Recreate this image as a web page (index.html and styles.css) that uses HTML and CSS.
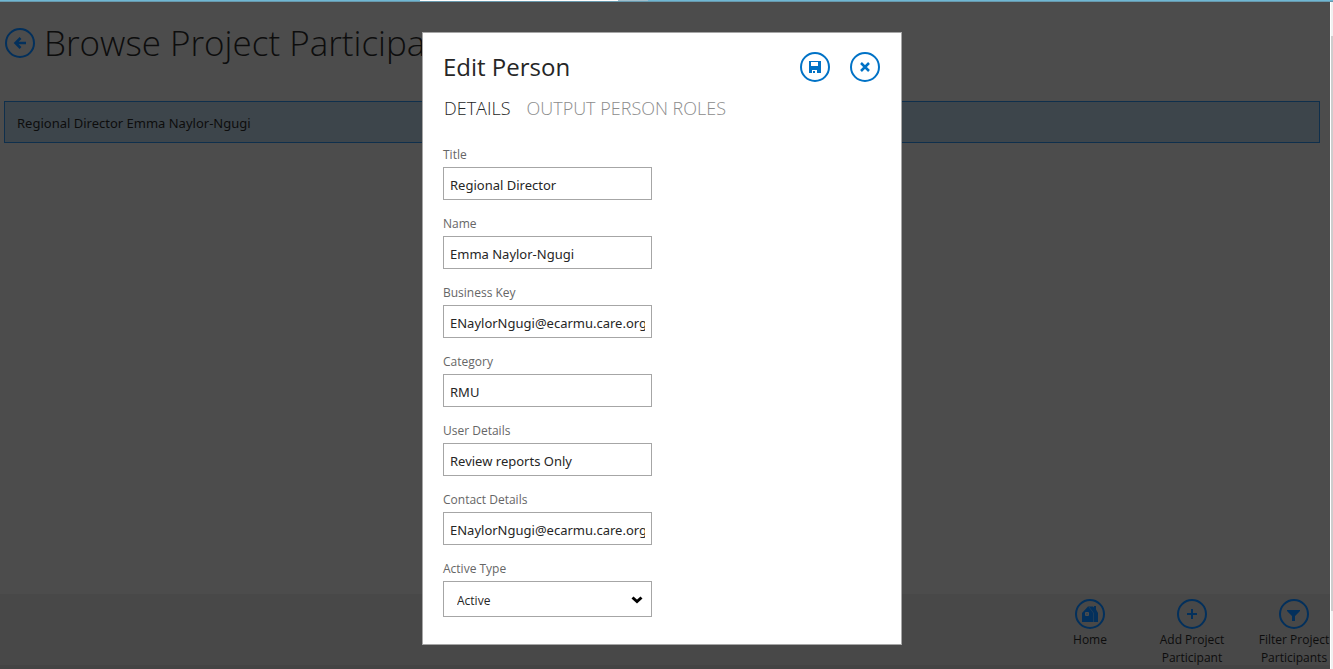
FILE: index.html
```html
<!DOCTYPE html>
<html lang="en">
<head>
<meta charset="utf-8">
<title>Browse Project Participants</title>
<link rel="stylesheet" href="styles.css">
</head>
<body>
<div class="tabstrip"><span class="tab-before"></span><span class="tab-active"></span><span class="tab-new"></span></div>
<div class="app">
  <div class="page">
    <header class="page-header">
      <button class="round round-dim" aria-label="Back">
        <svg viewBox="0 0 30 30"><path class="back-line" d="M21 15H10M15.5 10L10.500 15L15.5 20"/></svg>
      </button>
      <h1 class="page-title">Browse Project Participants</h1>
    </header>
    <main class="list">
      <a class="list-row" href="#">Regional Director Emma Naylor-Ngugi</a>
    </main>
    <footer class="commands">
      <button class="command">
        <span class="round round-dim"><svg viewBox="0 0 30 30"><path class="solid" d="M7 14L13 7.500H18L19 8.500V7H21V10.500L23 14V23H7Z"/><path class="pane" d="M10.5 13.5h3v3h-3zM12 13v4M10 15h4"/><path class="pane-edge" d="M18.500 14V23M18.500 14L14 8"/></svg></span>
        <span class="command-text">Home</span>
      </button>
      <button class="command">
        <span class="round round-dim"><svg viewBox="0 0 30 30"><path class="plus" d="M15 10V20M10 15H20"/></svg></span>
        <span class="command-text">Add Project Participant</span>
      </button>
      <button class="command">
        <span class="round round-dim"><svg viewBox="0 0 30 30"><path class="solid" d="M8 11H21V12L16 17V22H13V17L8 12Z"/></svg></span>
        <span class="command-text">Filter Project Participants</span>
      </button>
    </footer>
  </div>
  <div class="scrollbar"><div class="scroll-thumb"></div></div>
</div>
<div class="layer">
  <form class="dialog" role="dialog" aria-labelledby="dialog-title">
    <div class="dialog-head">
      <h2 class="dialog-title" id="dialog-title">Edit Person</h2>
      <button class="round" type="button" aria-label="Save">
        <svg viewBox="0 0 30 30"><path class="solid" fill-rule="evenodd" d="M9 9H21V21H9ZM11 10V14H18V10ZM12 18V21H13V19H15V21H17V18Z"/></svg>
      </button>
      <button class="round" type="button" aria-label="Close">
        <svg viewBox="0 0 30 30"><path class="cross" d="M11 11L19 19M19 11L11 19"/></svg>
      </button>
    </div>
    <nav class="tabs">
      <a class="tab tab-on" href="#">DETAILS</a>
      <a class="tab" href="#">OUTPUT PERSON ROLES</a>
    </nav>
    <div class="fields">
      <div class="field"><label for="title">Title</label><input id="title" type="text" value="Regional Director"></div>
      <div class="field"><label for="name">Name</label><input id="name" type="text" value="Emma Naylor-Ngugi"></div>
      <div class="field"><label for="key">Business Key</label><input id="key" type="text" value="ENaylorNgugi@ecarmu.care.org"></div>
      <div class="field"><label for="category">Category</label><input id="category" type="text" value="RMU"></div>
      <div class="field"><label for="user">User Details</label><input id="user" type="text" value="Review reports Only"></div>
      <div class="field"><label for="contact">Contact Details</label><input id="contact" type="text" value="ENaylorNgugi@ecarmu.care.org"></div>
      <div class="field"><label for="active">Active Type</label>
        <div class="select-wrap"><select id="active"><option>Active</option></select>
          <svg class="chevron" viewBox="0 0 12 8"><path d="M1.5 1.5L6 5.5L10.5 1.5"/></svg></div>
      </div>
    </div>
  </form>
</div>
</body>
</html>
```
FILE: styles.css
```css
* { box-sizing: border-box; }
body {
  margin: 0;
  height: 100vh;
  overflow: hidden;
  display: flex;
  flex-direction: column;
  font-family: "Noto Sans", "Open Sans", sans-serif;
  font-size: 13px;
  background: #4c4c4c;
  color: #0d0d0d;
}
button { font: inherit; color: inherit; border: 0; padding: 0; background: none; }
a { text-decoration: none; color: inherit; }
svg { display: block; }

.tabstrip { display: flex; height: 2px; background: #6fb7d3; border-bottom: 1px solid #6899ad; }
.tab-before { width: 420px; }
.tab-active { width: 198px; height: 1px; background: #fff; }
.tab-new { width: 30px; height: 1px; background: #9fbecb; }

.app { flex: 1; display: flex; min-height: 0; }
.page { flex: 1; display: flex; flex-direction: column; min-width: 0; }
.scrollbar { width: 3px; padding-top: 34px; background: #f0f0f0; border-left: 1px solid #fff; }
.scroll-thumb { height: 575px; background: #cdcdcd; }

.round {
  flex: none;
  width: 30px;
  height: 30px;
  border: 2px solid #0072c6;
  border-radius: 50%;
  color: #0072c6;
}
.round svg { width: 30px; height: 30px; margin: -2px; }
.round-dim { border-color: #03305c; color: #03305c; }
.solid { fill: currentColor; }
.back-line { fill: none; stroke: currentColor; stroke-width: 2.5; }
.plus { stroke: currentColor; stroke-width: 2; }
.cross { stroke: currentColor; stroke-width: 2.5; }
.pane { fill: none; stroke: #4c4c4c; stroke-width: 1; }
.pane-edge { fill: none; stroke: #1d3c5a; stroke-width: 1; }

.page-header { display: flex; align-items: center; gap: 9px; padding: 15px 5px 0; height: 66px; }
.page-title { margin: 0; font-family: "Open Sans", sans-serif; font-size: 35px; font-weight: 300; line-height: 50px; white-space: nowrap; }
.list { flex: 1; padding: 33px 10px 0 4px; }
.list-row {
  display: flex;
  align-items: center;
  height: 42px;
  padding: 2px 12px 0;
  border: 1px solid #0f2f4c;
  background: #3d454b;
}

.commands { display: flex; justify-content: flex-end; gap: 30px; height: 75px; padding-top: 5px; background: #484848; border-bottom: 4px solid #444; }
.command { width: 72px; display: flex; flex-direction: column; align-items: center; font-family: "Open Sans", sans-serif; font-size: 12px; }
.command-text { margin-top: 2px; line-height: 18px; }

.layer { position: absolute; inset: 0; display: flex; justify-content: center; align-items: flex-start; padding: 32px 9px 0 0; }
.dialog { width: 480px; padding: 19px 21px 27px 20px; background: #fff; border: 1px solid #a6a6a6; color: #262626; font-family: "Open Sans", sans-serif; }
.dialog-head { display: flex; align-items: center; gap: 20px; }
.dialog-title { flex: 1; margin: 0; font-size: 24px; font-weight: 400; line-height: 30px; }
.tabs { display: flex; gap: 16px; padding: 13px 0 0 1px; font-size: 18px; font-weight: 300; line-height: 26px; }
.tab { color: #8c8c8c; }
.tab-on { color: #262626; }
.fields { display: flex; flex-direction: column; gap: 15px; width: 209px; margin-top: 25px; }
.field { display: flex; flex-direction: column; gap: 3px; }
.field label { font-size: 12px; line-height: 18px; color: #666; }
input, select {
  font: inherit;
  width: 100%;
  height: 33px;
  margin: 0;
  border: 1px solid #a6a6a6;
  border-radius: 0;
  background: #fff;
  color: #262626;
  outline: 0;
}
input { padding: 3px 6px 0; font-family: "Noto Sans", sans-serif; }
select { display: block; height: 36px; padding: 2px 13px 0; font-size: 12px; appearance: none; }
.select-wrap { position: relative; }
.chevron { position: absolute; right: 9px; top: 15px; width: 12px; height: 8px; fill: none; stroke: #000; stroke-width: 3; pointer-events: none; }
```
